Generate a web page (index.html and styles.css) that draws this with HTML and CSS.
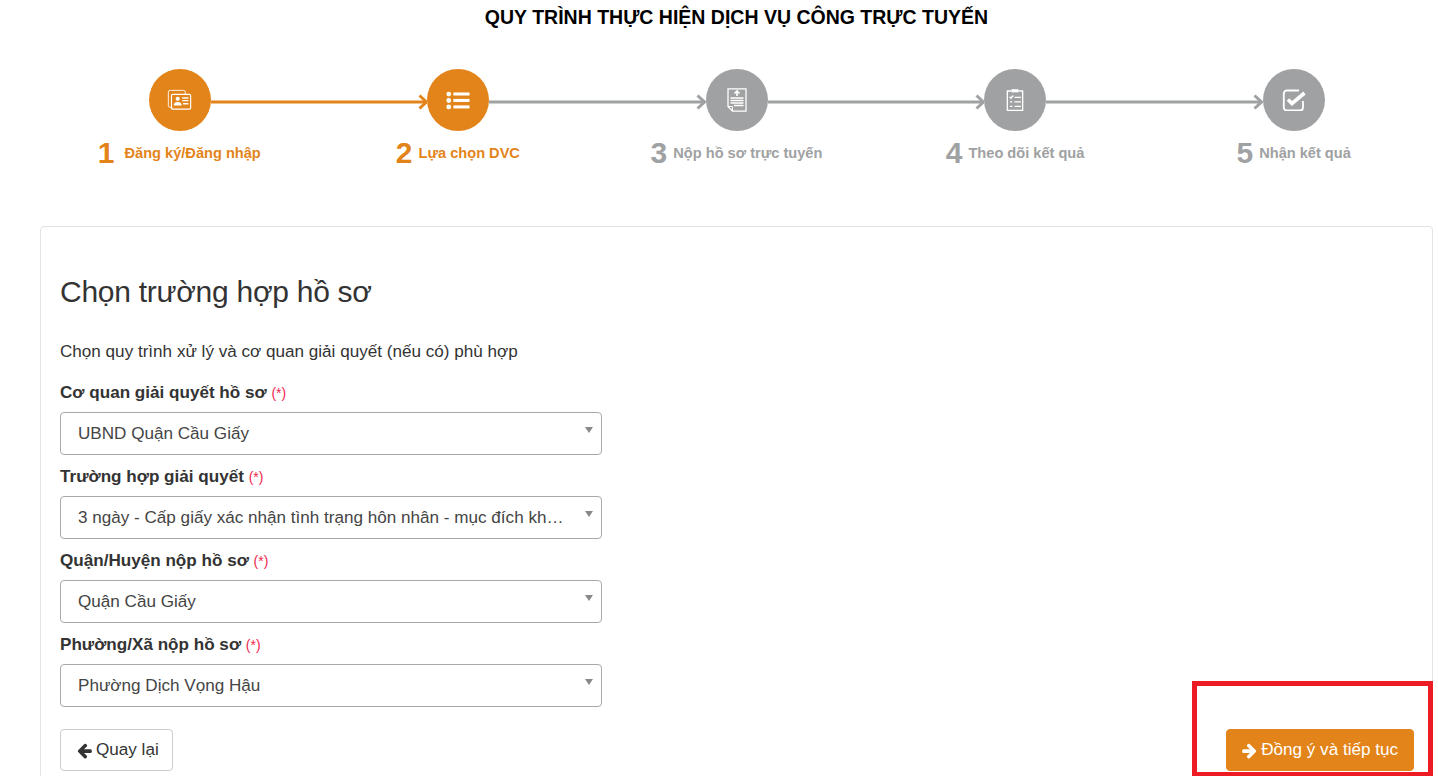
FILE: index.html
```html
<!DOCTYPE html>
<html lang="vi">
<head>
    <meta charset="UTF-8">
    <meta name="viewport" content="width=device-width, initial-scale=1.0">
    <title>Quy trình thực hiện dịch vụ công trực tuyến</title>
    <link rel="stylesheet" href="styles.css">
</head>
<body>
    <h1 class="page-title">QUY TRÌNH THỰC HIỆN DỊCH VỤ CÔNG TRỰC TUYẾN</h1>

    <div class="steps-track">
        <div class="step-circle step-done">
            <svg width="25" height="21.500" viewBox="0 0 28 24" fill="none" stroke="#fff" stroke-width="1">
                <path d="M6 20.500H3.500a2 2 0 0 1-2-2V3.500a2 2 0 0 1 2-2h15a2 2 0 0 1 2 2v2"/>
                <rect x="5" y="6" width="21.500" height="16.500" rx="1.500" stroke-width="1.300"/>
                <circle cx="12" cy="11" r="2.300" fill="#fff" stroke="none"/>
                <path d="M7.500 18.500c0-3 2-4 4.500-4s4.500 1 4.500 4z" fill="#fff" stroke="none"/>
                <path d="M17 10h7M17 13h7M18 16.500h6" stroke-width="1.500"/>
            </svg>
        </div>
        <svg class="connector" width="216.600" height="62" viewBox="0 0 216.600 62" fill="none" stroke="#e3841a">
            <path d="M0 33H216" stroke-width="3"/>
            <path d="M208.500 26.500l7 6.500-7 6.500" stroke-width="3"/>
        </svg>
        <div class="step-circle step-done">
            <svg width="24" height="19" viewBox="0 0 26 20" fill="#fff">
                <circle cx="3" cy="3" r="2.600"/>
                <circle cx="3" cy="10" r="2.600"/>
                <circle cx="3" cy="17" r="2.600"/>
                <rect x="8" y="1.300" width="17.500" height="3.300"/>
                <rect x="8" y="8.300" width="17.500" height="3.300"/>
                <rect x="8" y="15.300" width="17.500" height="3.300"/>
            </svg>
        </div>
        <svg class="connector" width="216.600" height="62" viewBox="0 0 216.600 62" fill="none" stroke="#a0a1a2">
            <path d="M0 33H216" stroke-width="3"/>
            <path d="M208.500 26.500l7 6.500-7 6.500" stroke-width="3"/>
        </svg>
        <div class="step-circle">
            <svg width="20" height="24" viewBox="0 0 20 24" fill="none" stroke="#fff">
                <path d="M1 .8h18v22.400H5.500L1 18.500z" stroke-width="1.300"/>
                <path d="M1 18.500h4.500v4.700" stroke-width="1"/>
                <path d="M10 8V3.500M7.500 5.500L10 3l2.500 2.500" stroke-width="1.600"/>
                <path d="M3.500 10h13M3.500 12.500h13M3.500 15h13M7 17.500h9.500" stroke-width="1.400"/>
            </svg>
        </div>
        <svg class="connector" width="216.600" height="62" viewBox="0 0 216.600 62" fill="none" stroke="#a0a1a2">
            <path d="M0 33H216" stroke-width="3"/>
            <path d="M208.500 26.500l7 6.500-7 6.500" stroke-width="3"/>
        </svg>
        <div class="step-circle">
            <svg width="18" height="26" viewBox="0 0 20 26" fill="none" stroke="#fff">
                <path d="M6 3H1.500v21.500h17V3H14" stroke-width="1.500"/>
                <rect x="6" y="1" width="8" height="3.500" fill="#fff" stroke="none"/>
                <path d="M4 9.500l1.500 1.500 2.500-3M4.500 15h2.500M4.500 20h2.500" stroke-width="1.500"/>
                <path d="M9.500 10h7M9.500 15h7M9.500 20h7" stroke-width="1.500"/>
            </svg>
        </div>
        <svg class="connector" width="216.600" height="62" viewBox="0 0 216.600 62" fill="none" stroke="#a0a1a2">
            <path d="M0 33H216" stroke-width="3"/>
            <path d="M208.500 26.500l7 6.500-7 6.500" stroke-width="3"/>
        </svg>
        <div class="step-circle">
            <svg width="24" height="22" viewBox="0 0 24 22" fill="none" stroke="#fff">
                <path d="M21 12v6.500a3 3 0 0 1-3 3H4.800a3 3 0 0 1-3-3V4.500a3 3 0 0 1 3-3H17" stroke-width="1.800"/>
                <path d="M6 10.500l4 4L22.500 4" stroke-width="3.600"/>
            </svg>
        </div>
    </div>

    <div class="steps-labels">
        <div class="step-label label-done"><span class="step-num num-first">1</span> Đăng ký/Đăng nhập</div>
        <div class="step-label label-done"><span class="step-num">2</span> Lựa chọn DVC</div>
        <div class="step-label"><span class="step-num">3</span> Nộp hồ sơ trực tuyến</div>
        <div class="step-label"><span class="step-num">4</span> Theo dõi kết quả</div>
        <div class="step-label"><span class="step-num">5</span> Nhận kết quả</div>
    </div>

    <div class="card">
        <h2 class="card-title">Chọn trường hợp hồ sơ</h2>
        <p class="card-intro">Chọn quy trình xử lý và cơ quan giải quyết (nếu có) phù hợp</p>

        <div class="field">
            <label class="field-label">Cơ quan giải quyết hồ sơ <span class="required">(*)</span></label>
            <div class="select-box"><span class="select-text">UBND Quận Cầu Giấy</span><span class="select-arrow"></span></div>
        </div>
        <div class="field">
            <label class="field-label">Trường hợp giải quyết <span class="required">(*)</span></label>
            <div class="select-box"><span class="select-text">3 ngày - Cấp giấy xác nhận tình trạng hôn nhân - mục đích khác trong nước</span><span class="select-arrow"></span></div>
        </div>
        <div class="field">
            <label class="field-label">Quận/Huyện nộp hồ sơ <span class="required">(*)</span></label>
            <div class="select-box"><span class="select-text">Quận Cầu Giấy</span><span class="select-arrow"></span></div>
        </div>
        <div class="field">
            <label class="field-label">Phường/Xã nộp hồ sơ <span class="required">(*)</span></label>
            <div class="select-box"><span class="select-text">Phường Dịch Vọng Hậu</span><span class="select-arrow"></span></div>
        </div>

        <div class="actions">
            <button class="btn">
                <svg width="17" height="17" viewBox="0 0 1792 1792" fill="currentColor"><path d="M1664 896v128q0 53-32.500 90.500t-84.500 37.500h-704l293 294q38 36 38 90t-38 90l-75 75q-38 38-91 38-52 0-90-38l-651-652q-37-37-37-90 0-52 37-91l651-650q38-38 90-38 52 0 91 38l75 74q38 38 38 91t-38 91l-293 293h704q52 0 84.500 37.500t32.500 90.500z"/></svg>
                Quay lại
            </button>
            <button class="btn btn-primary">
                <svg width="17" height="17" viewBox="0 0 1792 1792" fill="currentColor"><path d="M1600 960q0 54-37 91l-651 651q-39 37-91 37-51 0-90-37l-75-75q-38-38-38-91t38-91l293-293h-704q-52 0-84.500-37.500t-32.500-90.500v-128q0-53 32.500-90.500t84.500-37.500h704l-293-294q-38-36-38-90t38-90l75-75q38-38 90-38 53 0 91 38l651 651q37 35 37 90z"/></svg>
                Đồng ý và tiếp tục
            </button>
        </div>
    </div>

    <div class="highlight-box"></div>
</body>
</html>
```

FILE: styles.css
```css
html, body {
    height: 100%;
    overflow: hidden;
}
body {
    margin: 0;
    font-family: "Liberation Sans", Arial, sans-serif;
    font-size: 17.1px;
    color: #333;
    background-color: #fff;
}
.page-title {
    margin: 0;
    padding: 6px 0 0 35px;
    height: 69px;
    box-sizing: border-box;
    text-align: center;
    font-size: 19.500px;
    line-height: 22px;
    font-weight: bold;
    color: #000;
}
.steps-track {
    display: flex;
    align-items: flex-start;
    padding-left: 148.500px;
}
.step-circle {
    width: 62px;
    height: 62px;
    flex: none;
    border-radius: 50%;
    background-color: #a0a1a2;
    display: flex;
    align-items: center;
    justify-content: center;
}
.step-done {
    background-color: #e3841a;
}
.connector {
    flex: none;
    display: block;
}
.steps-labels {
    display: grid;
    grid-template-columns: repeat(5, 278.600px);
    margin: 2px 0 0 40px;
    height: 93px;
}
.step-label {
    display: flex;
    justify-content: center;
    align-items: center;
    gap: 6px;
    height: 40px;
    line-height: 40px;
    font-size: 14.600px;
    font-weight: bold;
    color: #a0a1a2;
}
.label-done {
    color: #e3841a;
}
.step-num {
    font-size: 30px;
}
.num-first {
    margin-right: 4px;
}
.card {
    margin: 0 5px 0 40px;
    padding: 47px 18px 40px 19px;
    border: 1px solid #e3e3e3;
    border-radius: 4px;
}
.card-title {
    margin: 0;
    font-size: 30px;
    line-height: 36px;
    font-weight: normal;
    letter-spacing: -0.280px;
}
.card-intro {
    margin: 31px 0 19px;
    line-height: 22px;
}
.field {
    margin-top: 11px;
}
.field-label {
    display: block;
    font-weight: bold;
    line-height: 22px;
    margin-bottom: 8px;
}
.required {
    color: #f0264f;
    font-size: 14px;
    font-weight: normal;
}
.select-box {
    display: flex;
    align-items: flex-start;
    width: 542px;
    height: 43px;
    box-sizing: border-box;
    padding: 0 8px 0 17px;
    border: 1px solid #a9a9a9;
    border-radius: 4px;
    color: #444;
}
.select-text {
    flex: 1;
    min-width: 0;
    line-height: 41px;
    white-space: nowrap;
    overflow: hidden;
    text-overflow: ellipsis;
    margin-right: 17px;
}
.select-arrow {
    flex: none;
    width: 0;
    height: 0;
    margin-top: 14px;
    border-left: 4.500px solid transparent;
    border-right: 4.500px solid transparent;
    border-top: 6px solid #888;
}
.actions {
    display: flex;
    justify-content: space-between;
    margin-top: 22px;
}
.btn {
    display: flex;
    align-items: center;
    gap: 3px;
    height: 42px;
    padding: 0 13px 0 15px;
    border: 1px solid #ccc;
    border-radius: 4px;
    background-color: #fff;
    color: #333;
    font-family: inherit;
    font-size: 17.1px;
}
.btn-primary {
    padding: 0 15px 0 14px;
    border-color: #e3841a;
    background-color: #e3841a;
    color: #fff;
}
.highlight-box {
    position: absolute;
    left: 1192px;
    top: 681px;
    width: 241px;
    height: 95px;
    box-sizing: border-box;
    border: 5px solid #ed1c24;
    border-bottom-width: 4px;
}
```
